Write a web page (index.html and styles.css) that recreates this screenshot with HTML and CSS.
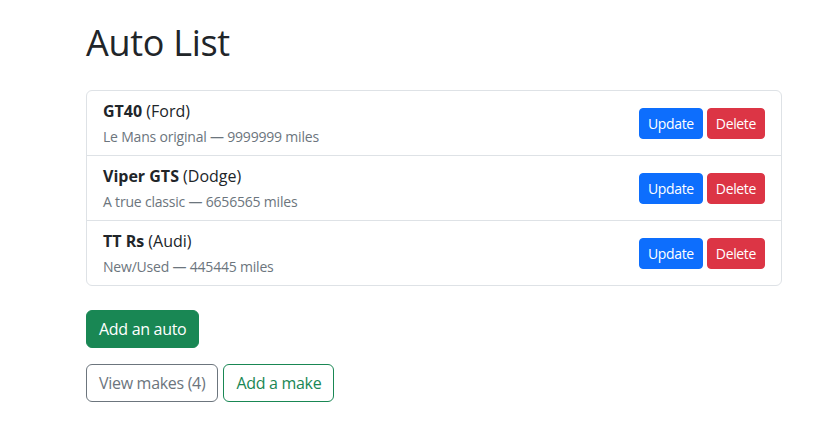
FILE: index.html
```html
<!DOCTYPE html>
<html lang="en">
<head>
<meta charset="utf-8">
<title>Auto List</title>
<link rel="stylesheet" href="styles.css">
</head>
<body>
<div class="page">
  <h1 class="title">Auto List</h1>
  <ul class="list">
    <li class="item">
      <div class="info">
        <div class="name"><strong>GT40</strong> (Ford)</div>
        <div class="desc">Le Mans original — 9999999 miles</div>
      </div>
      <div class="actions">
        <button class="btn btn-sm btn-primary">Update</button>
        <button class="btn btn-sm btn-danger">Delete</button>
      </div>
    </li>
    <li class="item">
      <div class="info">
        <div class="name"><strong>Viper GTS</strong> (Dodge)</div>
        <div class="desc">A true classic — 6656565 miles</div>
      </div>
      <div class="actions">
        <button class="btn btn-sm btn-primary">Update</button>
        <button class="btn btn-sm btn-danger">Delete</button>
      </div>
    </li>
    <li class="item">
      <div class="info">
        <div class="name"><strong>TT Rs</strong> (Audi)</div>
        <div class="desc">New/Used — 445445 miles</div>
      </div>
      <div class="actions">
        <button class="btn btn-sm btn-primary">Update</button>
        <button class="btn btn-sm btn-danger">Delete</button>
      </div>
    </li>
  </ul>
  <div class="row-main">
    <button class="btn btn-success">Add an auto</button>
  </div>
  <div class="row-secondary">
    <button class="btn btn-outline-secondary">View makes (4)</button>
    <button class="btn btn-outline-success">Add a make</button>
  </div>
</div>
</body>
</html>
```

FILE: styles.css
```css
* { box-sizing: border-box; }
body {
  margin: 0;
  font-family: "Open Sans", "Noto Sans", sans-serif;
  color: #212529;
  background: #fff;
}
.page {
  width: 696px;
  margin-left: 86px;
  padding-top: 19px;
}
.title {
  font-size: 36px;
  line-height: 48px;
  font-weight: 400;
  letter-spacing: -0.3px;
  margin: 0 0 23px;
}
.list {
  list-style: none;
  margin: 0;
  padding: 0;
  border: 1px solid #dee2e6;
  border-radius: 6px;
}
.item {
  display: flex;
  align-items: center;
  justify-content: space-between;
  padding: 8px 16px;
  border-top: 1px solid #dee2e6;
}
.item:first-child { border-top: 0; }
.name {
  font-size: 16px;
  line-height: 24px;
  margin-bottom: 3px;
}
.name strong { font-weight: 700; }
.desc {
  font-size: 14px;
  line-height: 21px;
  color: #6c757d;
  letter-spacing: -0.2px;
}
.actions {
  display: flex;
  gap: 4px;
}
.btn {
  font-family: inherit;
  font-size: 16px;
  line-height: 24px;
  padding: 6px 12px;
  border: 1px solid transparent;
  border-radius: 6px;
  background: transparent;
  letter-spacing: -0.3px;
  cursor: pointer;
}
.btn-sm {
  font-size: 14px;
  line-height: 21px;
  padding: 4px 8px;
  border-radius: 4px;
  letter-spacing: -0.35px;
}
.btn-primary { background: #0d6efd; border-color: #0d6efd; color: #fff; }
.btn-danger { background: #dc3545; border-color: #dc3545; color: #fff; }
.btn-success { background: #198754; border-color: #198754; color: #fff; }
.btn-outline-secondary { border-color: #6c757d; color: #6c757d; }
.btn-outline-success { border-color: #198754; color: #198754; }
.row-main { margin-top: 24px; }
.row-secondary {
  margin-top: 16px;
  display: flex;
  gap: 5px;
}
```
